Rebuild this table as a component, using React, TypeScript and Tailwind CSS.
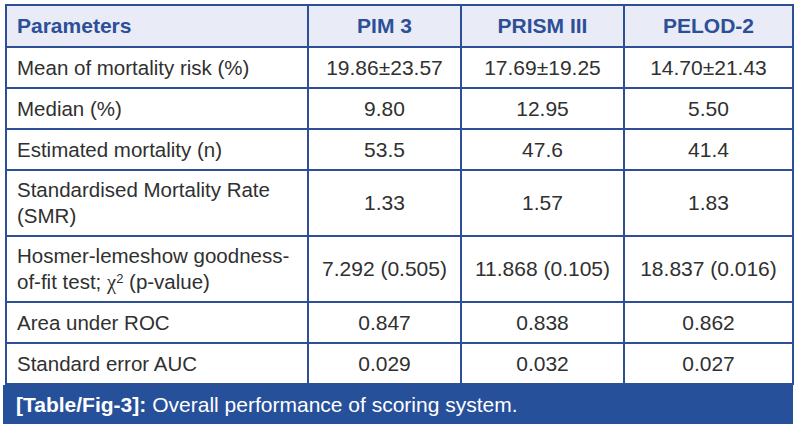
import React from "react";

const rows: { label: React.ReactNode; vals: string[]; tall?: boolean }[] = [
  { label: "Mean of mortality risk (%)", vals: ["19.86±23.57", "17.69±19.25", "14.70±21.43"] },
  { label: "Median (%)", vals: ["9.80", "12.95", "5.50"] },
  { label: "Estimated mortality (n)", vals: ["53.5", "47.6", "41.4"] },
  {
    label: (
      <>
        Standardised Mortality Rate
        <br />
        (SMR)
      </>
    ),
    vals: ["1.33", "1.57", "1.83"],
    tall: true,
  },
  {
    label: (
      <>
        Hosmer-lemeshow goodness-
        <br />
        of-fit test;{" "}
        <span className="font-['Liberation_Serif',serif]">χ</span>
        <sup className="text-[13px]">2</sup> (p-value)
      </>
    ),
    vals: ["7.292 (0.505)", "11.868 (0.105)", "18.837 (0.016)"],
    tall: true,
  },
  { label: "Area under ROC", vals: ["0.847", "0.838", "0.862"] },
  { label: "Standard error AUC", vals: ["0.029", "0.032", "0.027"] },
];

export default function App() {
  return (
    <div className="w-[796px] h-[429px] bg-white pt-[4px] pl-[3px] font-['Liberation_Sans',Arial,sans-serif] text-[21px] text-[#303030]">
      <table className="table-fixed border-collapse ml-[2px]">
        <colgroup>
          <col className="w-[302px]" />
          <col className="w-[153px]" />
          <col className="w-[163px]" />
          <col className="w-[169px]" />
        </colgroup>
        <thead>
          <tr className="h-[42px] bg-[#e9ebf6] text-[#2d4f97]">
            <th className="border-2 border-[#2d4f97] text-left pl-[10px] font-bold">Parameters</th>
            <th className="border-2 border-[#2d4f97] text-center font-bold">PIM 3</th>
            <th className="border-2 border-[#2d4f97] text-center font-bold">PRISM III</th>
            <th className="border-2 border-[#2d4f97] text-center font-bold">PELOD-2</th>
          </tr>
        </thead>
        <tbody>
          {rows.map((r, i) => (
            <tr key={i} className={r.tall ? "h-[66px]" : "h-[41px]"}>
              <td className="border-2 border-[#2d4f97] pl-[10px] text-[20.5px] leading-[26px]">{r.label}</td>
              {r.vals.map((v, j) => (
                <td key={j} className="border-2 border-[#2d4f97] text-center">
                  {v}
                </td>
              ))}
            </tr>
          ))}
        </tbody>
      </table>
      <div className="w-[790px] h-[39px] bg-[#27509b] text-white flex items-center pl-[13px]">
        <span className="font-bold">[Table/Fig-3]:</span>
        <span className="ml-[6px]">Overall performance of scoring system.</span>
      </div>
    </div>
  );
}
